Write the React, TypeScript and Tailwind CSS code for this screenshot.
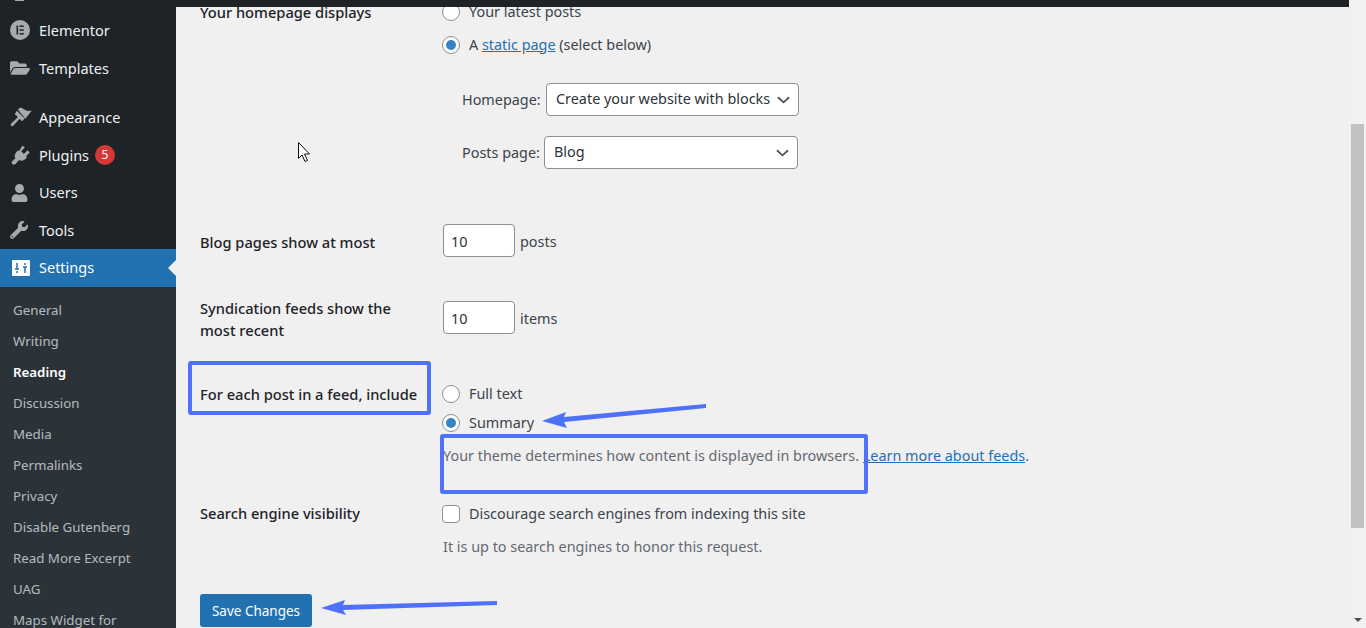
import { FaFolderOpen, FaUser, FaWrench } from "react-icons/fa";

const submenu = [
  "General",
  "Writing",
  "Reading",
  "Discussion",
  "Media",
  "Permalinks",
  "Privacy",
  "Disable Gutenberg",
  "Read More Excerpt",
  "UAG",
  "Maps Widget for",
];

function ElementorIcon() {
  return (
    <svg viewBox="0 0 20 20" className="w-5 h-5 fill-[#a7aaad]">
      <path fillRule="evenodd" d="M10 0a10 10 0 1 0 0 20 10 10 0 0 0 0-20zM6.5 5.5h1.6v9H6.5zm3 0h4.2v1.600H9.500zm0 3.700h4.200v1.600H9.500zm0 3.700h4.200v1.600H9.500z" />
    </svg>
  );
}

function BrushIcon() {
  return (
    <svg viewBox="0 0 21 21" className="w-[22px] h-[22px] fill-[#a7aaad]">
      <path d="M7.500 2.500L10 .5c2 .4 3 1.700 5 2.500 2 .8 3.500.9 5.800.4l-6.100 7.900z" />
      <path d="M6.500 3.500l7.500 7.500-2.500 2.500-1.500-1.500c-.7-.7-1.300-.4-2 .5-1.500 2-3.500 4-5 5.500-.8.700-2 .4-2.300-.5-.2-.7.100-1.300.7-1.900l5.300-5c.7-.7.700-1.300.2-1.800L4.500 7z" />
    </svg>
  );
}

function PlugIcon() {
  return (
    <svg viewBox="0 0 20 20" className="w-5 h-5 fill-[#a7aaad]">
      <path d="M12.400 .5l2.400 2-3.600 3.800 2.700 2.600 3.700-3.600 2.100 2.200-3.700 3.800 1 1-1.600 1.600c-1.900 1.800-4.300 2.200-6.300 1.200L5 19.500H2.500L1.500 17l3.800-3.800c-1.100-2-.6-4.600 1.100-6.300L8 5.300l1 1z" />
    </svg>
  );
}

function SettingsIcon() {
  return (
    <svg viewBox="0 0 18 16" className="w-[18px] h-4">
      <rect width="18" height="16" rx="1" fill="#fff" />
      <path d="M5 3v6M3 9h4M5 11v2M13 13V7M11 7h4M13 5V3" stroke="#2271b1" strokeWidth="1.500" fill="none" />
    </svg>
  );
}

function SidebarItem({ icon, label, badge, tall }: { icon: React.ReactNode; label: string; badge?: string; tall?: boolean }) {
  return (
    <div className={`flex items-center text-[#f0f0f1] ${tall ? "h-[38px]" : "h-[37.500px]"}`}>
      <span className="w-[39px] pl-[10px] flex items-center">{icon}</span>
      <span className="pt-px">{label}</span>
      {badge && (
        <span className="ml-[6px] w-5 h-5 rounded-full bg-[#d63638] text-white text-xs flex items-center justify-center">
          {badge}
        </span>
      )}
    </div>
  );
}

function Sidebar() {
  return (
    <aside className="w-[176px] shrink-0 bg-[#1d2327] text-[14.500px] overflow-hidden">
      <div className="w-[9px] h-px ml-[15px] bg-[#a7aaad]" />
      <div className="pt-[10px]">
        <SidebarItem tall icon={<ElementorIcon />} label="Elementor" />
        <SidebarItem tall icon={<FaFolderOpen className="w-5 h-5 text-[#a7aaad]" />} label="Templates" />
      </div>
      <div className="mt-[12px]">
        <SidebarItem icon={<BrushIcon />} label="Appearance" />
        <SidebarItem icon={<PlugIcon />} label="Plugins" badge="5" />
        <SidebarItem icon={<FaUser className="w-[17px] h-[18px] ml-[1px] text-[#a7aaad]" />} label="Users" />
        <SidebarItem icon={<FaWrench className="w-[18px] h-[18px] text-[#a7aaad]" />} label="Tools" />
      </div>
      <div className="relative flex items-center h-[38px] bg-[#2271b1] text-white">
        <span className="w-[39px] pl-[12px] flex items-center">
          <SettingsIcon />
        </span>
        <span>Settings</span>
        <span className="absolute right-0 top-[11px] border-y-[8px] border-r-[8px] border-y-transparent border-r-[#f0f0f1]" />
      </div>
      <ul className="bg-[#2c3338] pt-[8px] h-[400px] text-[13.300px] text-[#f0f6fcb3]">
        {submenu.map((item) => (
          <li
            key={item}
            className={`h-[31px] pl-[13px] flex items-center whitespace-nowrap ${item === "Reading" ? "font-semibold text-white" : ""}`}
          >
            {item}
          </li>
        ))}
      </ul>
    </aside>
  );
}

function Radio({ checked }: { checked?: boolean }) {
  return (
    <span className="-ml-px mr-px w-[18px] h-[18px] shrink-0 rounded-full border border-[#8c8f94] bg-white flex items-center justify-center">
      {checked && <span className="w-[10px] h-[10px] rounded-full bg-[#3582c4]" />}
    </span>
  );
}

function SelectBox({ value, className }: { value: string; className: string }) {
  return (
    <div className={`h-[33px] bg-white border border-[#8c8f94] rounded-[4px] flex items-center justify-between pl-[9px] pr-[8px] text-[#2c3338] ${className}`}>
      <span className="-mt-px">{value}</span>
      <svg viewBox="0 0 14 8" className="w-[13px] h-2 fill-none stroke-[#50575e] stroke-2">
        <path d="M1 1l6 5.500L13 1" />
      </svg>
    </div>
  );
}

function NumberBox({ value }: { value: string }) {
  return (
    <div className="w-[72px] h-[33px] shrink-0 bg-white border border-[#8c8f94] rounded-[4px] flex items-center pl-[7px] pt-[2px] text-[#2c3338]">
      {value}
    </div>
  );
}

function Label({ children, className }: { children: React.ReactNode; className?: string }) {
  return <div className={`w-[243px] shrink-0 font-medium text-[14.650px] text-[#1d2327] ${className ?? ""}`}>{children}</div>;
}

function Settings() {
  return (
    <div className="-mt-[6px] pl-[24px] text-[#3c434a] text-[14.400px] leading-[22px]">
      <div className="flex">
        <Label>Your homepage displays</Label>
        <div>
          <div className="flex items-center gap-[8px] h-[22px]">
            <Radio />
            <span className="-mt-px">Your latest posts</span>
          </div>
          <div className="flex items-center gap-[8px] h-[22px] mt-[11px]">
            <Radio checked />
            <span className="-mt-px">
              A <a className="text-[#2271b1] underline">static page</a> (select below)
            </span>
          </div>
          <div className="flex items-center ml-[19px] mt-[27px]">
            <span className="w-[84px]">Homepage:</span>
            <SelectBox value="Create your website with blocks" className="w-[253px]" />
          </div>
          <div className="flex items-center ml-[19px] mt-[20px]">
            <span className="w-[82px]">Posts page:</span>
            <SelectBox value="Blog" className="w-[254px]" />
          </div>
        </div>
      </div>

      <div className="flex items-center mt-[55px]">
        <Label className="mt-[2px]">Blog pages show at most</Label>
        <NumberBox value="10" />
        <span className="ml-[5px] mt-[2px]">posts</span>
      </div>

      <div className="flex items-start mt-[41px]">
        <Label className="-mt-px">
          Syndication feeds show the
          <br />
          most recent
        </Label>
        <div className="flex items-center mt-[3px]">
          <NumberBox value="10" />
          <span className="ml-[5px] mt-[2px]">items</span>
        </div>
      </div>

      <div className="flex mt-[42px]">
        <Label>For each post in a feed, include</Label>
        <div>
          <div className="flex items-center gap-[8px] h-[22px]">
            <Radio />
            <span>Full text</span>
          </div>
          <div className="flex items-center gap-[8px] h-[22px] mt-[7px]">
            <Radio checked />
            <span>Summary</span>
          </div>
          <p className="mt-[11px] text-[#646970] whitespace-nowrap">
            Your theme determines how content is displayed in browsers.{" "}
            <a className="text-[#2271b1] underline">Learn more about feeds</a>.
          </p>
        </div>
      </div>

      <div className="flex mt-[36px]">
        <Label className="-mt-px">Search engine visibility</Label>
        <div>
          <div className="flex items-center gap-[8px] h-[22px]">
            <span className="-ml-px mr-px w-[18px] h-[18px] rounded-[4px] border border-[#8c8f94] bg-white" />
            <span>Discourage search engines from indexing this site</span>
          </div>
          <p className="mt-[11px] text-[#646970]">It is up to search engines to honor this request.</p>
        </div>
      </div>

      <button className="block mt-[36px] w-[112px] h-[33px] rounded-[3px] bg-[#2271b1] text-white text-[13.500px]">
        Save Changes
      </button>
    </div>
  );
}

// annotations drawn on top of the screenshot
function Annotations() {
  return (
    <>
      <div className="absolute left-[188px] top-[361px] w-[243px] h-[54px] border-4 border-[#4f70f8] rounded-[3px]" />
      <div className="absolute left-[440px] top-[434px] w-[428px] h-[60px] border-4 border-[#4f70f8] rounded-[3px]" />
      <svg viewBox="0 0 1366 628" className="absolute inset-0 w-[1366px] h-[628px] pointer-events-none">
        <path d="M542 421l24-9-2 5 142-13 0 4-142 14 3 6z" fill="#4f70f8" />
        <path d="M321 608l24-8-2 5 154-4 0 4-154 5 3 5z" fill="#4f70f8" />
        <path d="M298.500 142.500v16l3.500-3.500 3 6.500 2.500-1-3-6.500h5z" fill="#fff" stroke="#111" strokeWidth="1" />
      </svg>
    </>
  );
}

export default function App() {
  return (
    <div className="relative flex w-[1366px] h-[628px] overflow-hidden bg-[#f0f0f1] font-['Noto_Sans',sans-serif]">
      <Sidebar />
      <main className="flex-1 min-w-0">
        <div className="relative z-10 h-[7px] bg-[#1d2327]" />
        <Settings />
      </main>
      <div className="relative w-[17px] shrink-0 bg-[#f1f1f1] pt-[124px] px-[2px]">
        <div className="h-[404px] bg-[#c1c1c1]" />
        <span className="absolute left-[5px] top-[618px] border-x-[4px] border-t-[4px] border-x-transparent border-t-[#505050]" />
      </div>
      <Annotations />
    </div>
  );
}
